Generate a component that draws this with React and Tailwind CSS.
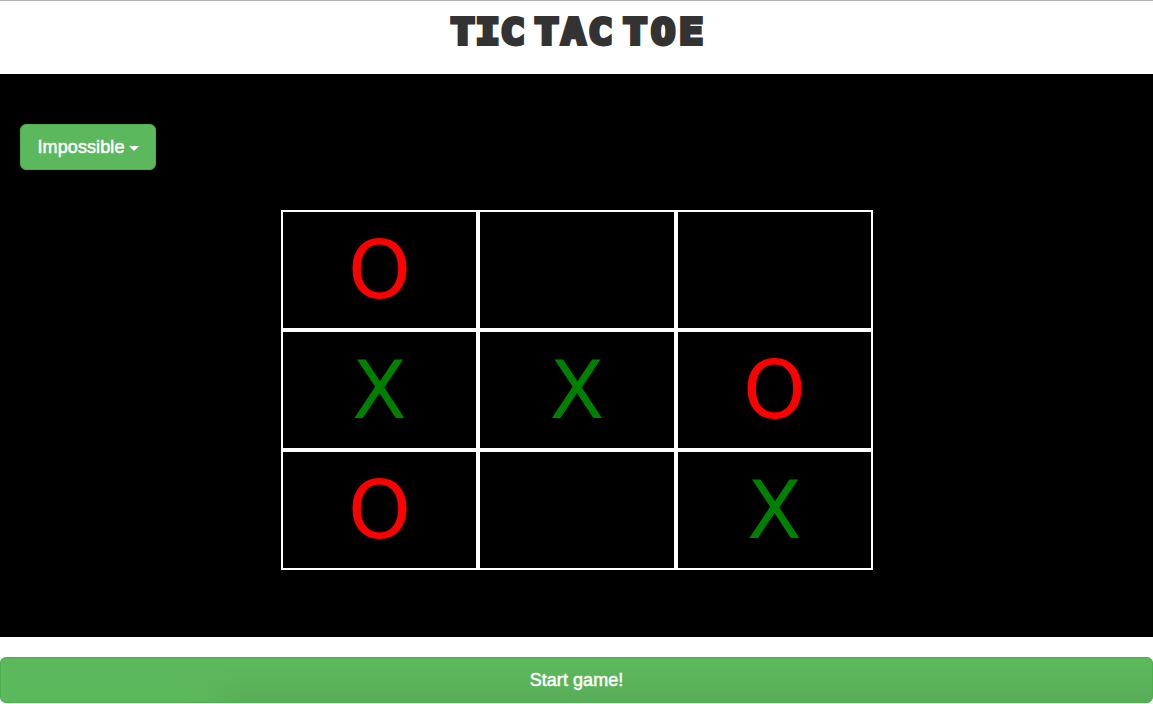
const board = ['O', '', '', 'X', 'X', 'O', 'O', '', 'X'];

function Cell({ mark }) {
  return (
    <div
      className={`flex h-[120px] items-center justify-center border-2 border-white pt-[2px] pl-px font-['DejaVu_Sans',sans-serif] text-[80px] leading-none ${
        mark === 'O' ? 'text-[#ff0000]' : 'text-[#008000]'
      }`}
    >
      {mark}
    </div>
  );
}

export default function App() {
  return (
    <div className="flex h-[704px] w-full flex-col overflow-hidden bg-white font-['Liberation_Sans',sans-serif]">
      <header className="flex h-[74px] shrink-0 justify-center border-t border-[#b3b3b3] pt-[11px]">
        <h1 className="flex scale-x-[1.12] font-['DejaVu_Sans_Mono',monospace] text-[36px] leading-[40px] font-bold text-[#333] [-webkit-text-stroke:3.8px_#333]">
          <span className="w-[75px] tracking-[0.7px]">TIC </span>
          <span className="w-[79px] tracking-[2.3px]">TAC </span>
          <span className="w-[71px] tracking-[3.3px]">TOE</span>
        </h1>
      </header>
      <main className="h-[563px] shrink-0 bg-black pt-[50px]">
        <button className="ml-5 flex h-[46px] w-[136px] items-center justify-center gap-[4px] rounded-[6px] border border-[#4cae4c] bg-[#5cb85c] text-[18px] leading-6 text-white [-webkit-text-stroke:0.5px_white]">
          <span className="w-[88px] whitespace-nowrap tracking-[0.1px]">Impossible</span>
          <span className="mt-[3px] h-0 w-0 border-x-[5px] border-t-[5px] border-x-transparent border-t-white" />
        </button>
        <div className="mx-auto mt-10 grid w-[592px] grid-cols-[197px_198px_197px]">
          {board.map((mark, i) => (
            <Cell key={i} mark={mark} />
          ))}
        </div>
      </main>
      <footer className="mt-5 h-[47px] shrink-0 bg-white">
        <button className="flex h-[46px] w-full items-center justify-center rounded-[6px] border border-[#4cae4c] bg-[#5cb85c] bg-[linear-gradient(to_right,#5cb85c_185px,transparent_250px),linear-gradient(to_bottom,#5cb85c_15%,#58ad58_100%)] text-[18px] tracking-[0.06px] text-white [-webkit-text-stroke:0.5px_white]">
          Start game!
        </button>
      </footer>
    </div>
  );
}
